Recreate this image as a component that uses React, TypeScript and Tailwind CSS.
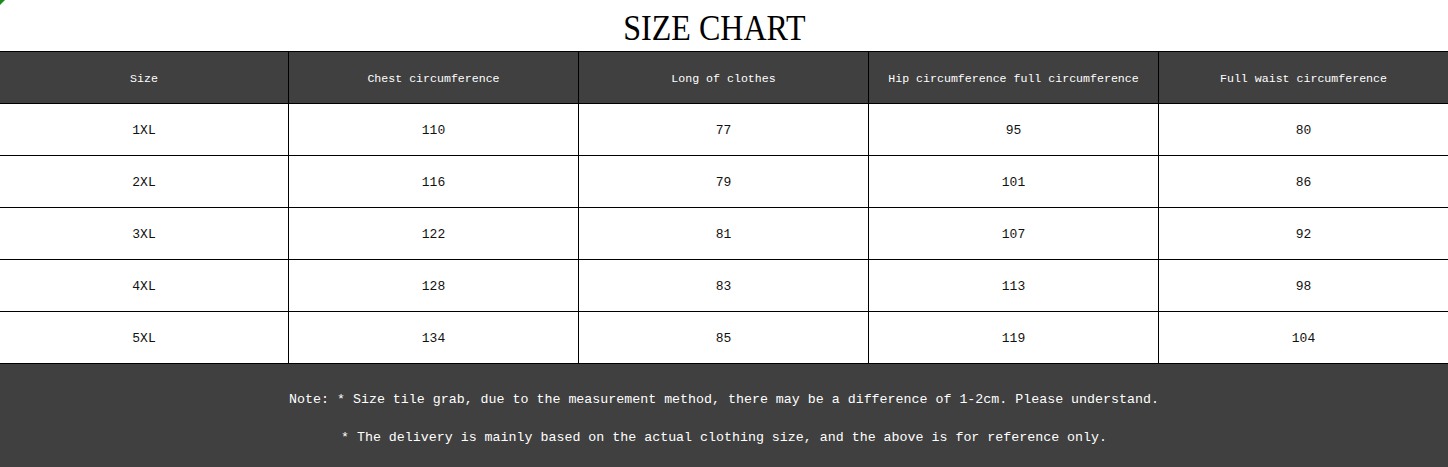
import React from "react";

const headers = [
  "Size",
  "Chest circumference",
  "Long of clothes",
  "Hip circumference full circumference",
  "Full waist circumference",
];

const rows = [
  ["1XL", "110", "77", "95", "80"],
  ["2XL", "116", "79", "101", "86"],
  ["3XL", "122", "81", "107", "92"],
  ["4XL", "128", "83", "113", "98"],
  ["5XL", "134", "85", "119", "104"],
];

const grid = "grid grid-cols-[289px_290px_290px_290px_1fr]";

const App: React.FC = () => {
  return (
    <div className="relative w-[1448px] h-[467px] overflow-hidden bg-white font-['Liberation_Mono',monospace]">
      {/* tiny green corner mark */}
      <div className="absolute left-0 top-0 h-0 w-0 border-t-[5px] border-r-[5px] border-t-[#1a8a1a] border-r-transparent" />

      <div className="flex h-[51px] items-center justify-center">
        <h1 className="mr-[20px] pt-[5px] font-['Liberation_Serif',serif] text-[36px] leading-none text-black scale-x-[0.89]">
          SIZE CHART
        </h1>
      </div>

      <div className={`${grid} h-[53px] border-y border-black bg-[#404040] text-[11.6px] text-white`}>
        {headers.map((h, i) => (
          <div
            key={h}
            className={`flex items-center justify-center pt-[2px] ${i < 4 ? "border-r border-black" : ""}`}
          >
            {h}
          </div>
        ))}
      </div>

      {rows.map((r) => (
        <div key={r[0]} className={`${grid} h-[52px] border-b border-black text-[13px] text-[#111]`}>
          {r.map((c, i) => (
            <div
              key={i}
              className={`flex items-center justify-center pt-[3px] ${i < 4 ? "border-r border-black" : ""}`}
            >
              {c}
            </div>
          ))}
        </div>
      ))}

      <div className="flex h-[104px] flex-col items-center gap-[20px] bg-[#404040] pt-[27px] text-[13.3px] text-white">
        <p className="leading-[18px]">
          Note: * Size tile grab, due to the measurement method, there may be a difference of 1-2cm. Please understand.
        </p>
        <p className="leading-[18px]">
          * The delivery is mainly based on the actual clothing size, and the above is for reference only.
        </p>
      </div>
    </div>
  );
};

export default App;
